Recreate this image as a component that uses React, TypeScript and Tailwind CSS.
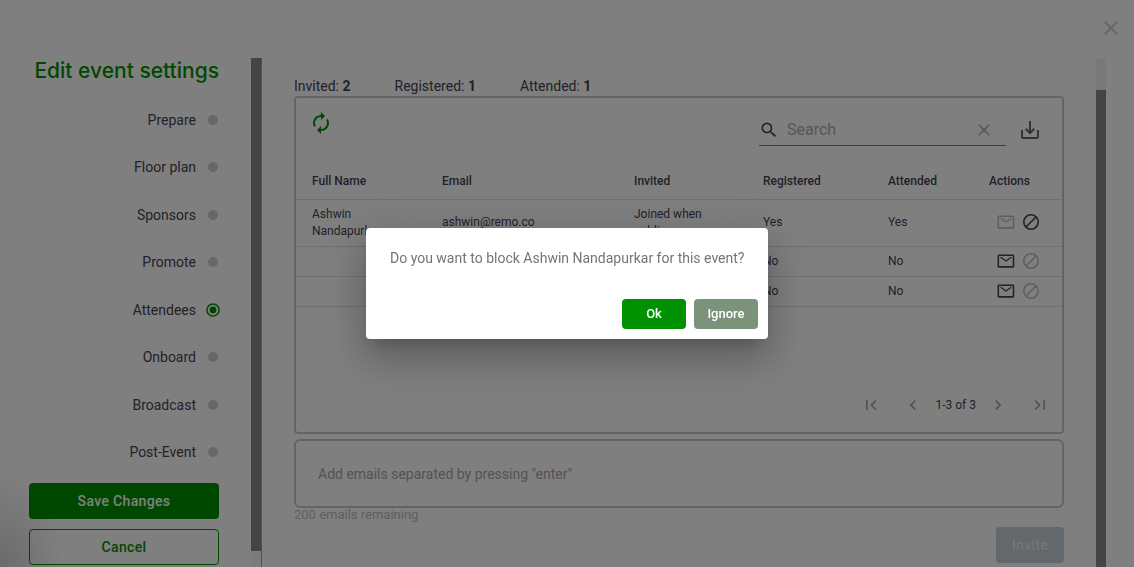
import { useState } from "react";
import {
  MdAutorenew,
  MdChevronLeft,
  MdChevronRight,
  MdClose,
  MdFirstPage,
  MdLastPage,
  MdSaveAlt,
  MdSearch,
} from "react-icons/md";

const steps = ["Prepare", "Floor plan", "Sponsors", "Promote", "Attendees", "Onboard", "Broadcast", "Post-Event"];

const columns = ["Full Name", "Email", "Invited", "Registered", "Attended", "Actions"];

const attendees = [
  { name: "Ashwin Nandapurkar", email: "ashwin@remo.co", invited: "Joined when public", registered: "Yes", attended: "Yes", joined: true },
  { name: "", email: "", invited: "", registered: "No", attended: "No", joined: false },
  { name: "", email: "", invited: "", registered: "No", attended: "No", joined: false },
];

function MailIcon() {
  return (
    <svg viewBox="0 0 20 20" className="w-5 h-5" fill="none" stroke="currentColor" strokeWidth="1.6" strokeLinejoin="round">
      <rect x="2.3" y="4.3" width="15.2" height="11.6" rx="0.6" />
      <path d="M5 6.5 L10 10 L15 6.5" strokeWidth="1.3" strokeLinecap="round" />
    </svg>
  );
}

function BlockIcon() {
  return (
    <svg viewBox="0 0 20 20" className="w-5 h-5" fill="none" stroke="currentColor" strokeWidth="1.6">
      <circle cx="10" cy="10" r="7.2" />
      <path d="M5 15 L15 5" />
    </svg>
  );
}

function ActiveDot() {
  return (
    <svg viewBox="0 0 14 14" className="w-3.5 h-3.5 -ml-0.5 -mr-px text-[#009100]">
      <circle cx="7" cy="7" r="6.1" fill="none" stroke="currentColor" strokeWidth="1.5" />
      <circle cx="7" cy="7" r="3.4" fill="currentColor" />
    </svg>
  );
}

function Sidebar() {
  return (
    <aside className="w-[251px] shrink-0 pl-[29px] pr-8">
      <h1 className="h-[26px] leading-[26px] text-right text-[21px] font-medium text-[#009100] font-['Inter',sans-serif] whitespace-nowrap">
        Edit event settings
      </h1>
      <ul className="mt-3 h-[380px] flex flex-col">
        {steps.map((step) => (
          <li key={step} className="flex-1 flex items-center">
            <a href="#" className="w-full flex items-center justify-end gap-3 text-sm">
              {step}
              {step === "Attendees" ? <ActiveDot /> : <span className="w-2.5 h-2.5 mr-px rounded-full bg-[#c5d0d8]"></span>}
            </a>
          </li>
        ))}
      </ul>
      <button className="mt-[7px] w-full h-9 rounded bg-[#009100] text-white text-sm font-medium tracking-wide">Save Changes</button>
      <button className="mt-2.5 w-full h-9 rounded border border-[#009100] text-[#009100] text-sm font-medium tracking-wide">Cancel</button>
    </aside>
  );
}

function AttendeeTable() {
  return (
    <table className="w-full table-fixed text-xs text-left">
      <colgroup>
        <col className="w-[130px]" />
        <col className="w-[192px]" />
        <col className="w-[129px]" />
        <col className="w-[125px]" />
        <col className="w-[101px]" />
        <col className="w-[89px]" />
      </colgroup>
      <thead>
        <tr className="h-[37px] border-b border-[#e0e0e0]">
          {columns.map((column) => (
            <th key={column} className="px-4 pt-0.5 font-medium">{column}</th>
          ))}
        </tr>
      </thead>
      <tbody>
        {attendees.map((row, i) => {
          const pad = row.joined ? "pb-0.5" : "";
          return (
            <tr key={i} className={`border-b border-[#e0e0e0] ${row.joined ? "h-[47px]" : "h-[30px]"}`}>
              <td className="px-4 leading-[17px]">{row.name}</td>
              <td className={`px-4 ${pad}`}>{row.email}</td>
              <td className="px-4 leading-[17px]">{row.invited}</td>
              <td className={`px-4 ${pad}`}>{row.registered}</td>
              <td className={`px-4 ${pad}`}>{row.attended}</td>
              <td className={`pl-[23px] ${pad}`}>
                <div className="flex gap-[5px]">
                  <button aria-label="Resend email" className={row.joined ? "text-[#bdbdbd]" : ""}><MailIcon /></button>
                  <button aria-label="Block attendee" className={row.joined ? "" : "text-[#bdbdbd]"}><BlockIcon /></button>
                </div>
              </td>
            </tr>
          );
        })}
      </tbody>
    </table>
  );
}

function Attendees() {
  const [search, setSearch] = useState("");

  return (
    <main className="flex-1 min-w-0 px-8 pt-[19px]">
      <div className="flex gap-11 h-[19px] text-sm leading-[19px]">
        <p>Invited: <b>2</b></p>
        <p>Registered: <b>1</b></p>
        <p>Attended: <b>1</b></p>
      </div>

      <section className="h-[338px] flex flex-col rounded border-2 border-[#c8c8c8]">
        <div className="h-16 shrink-0 flex justify-between pl-[13px] pr-5">
          <button aria-label="Refresh" className="h-6 mt-[13px] text-[#009100]"><MdAutorenew size={24} /></button>
          <div className="flex items-start">
            <label className="flex items-center w-[247px] h-8 mt-4 border-b border-[#7c7c7c]">
              <MdSearch size={20} className="shrink-0" />
              <input
                type="text"
                aria-label="Search"
                placeholder="Search"
                value={search}
                onChange={(e) => setSearch(e.target.value)}
                className="flex-1 min-w-0 ml-2 text-base outline-none placeholder:text-[#acacac]"
              />
              <button aria-label="Clear search" className="mr-3 text-[#b0b0b0]" onClick={() => setSearch("")}><MdClose size={20} /></button>
            </label>
            <button aria-label="Download" className="ml-3 mt-5 text-[#666666]"><MdSaveAlt size={24} /></button>
          </div>
        </div>
        <AttendeeTable />
        <div className="mt-auto mb-[15px] h-6 flex items-center justify-end pr-3 text-xs">
          <button aria-label="First page" className="text-[#a4a4a4]"><MdFirstPage size={20} /></button>
          <button aria-label="Previous page" className="ml-[22px] text-[#a4a4a4]"><MdChevronLeft size={20} /></button>
          <span className="mx-3">1-3 of 3</span>
          <button aria-label="Next page" className="text-[#a4a4a4]"><MdChevronRight size={20} /></button>
          <button aria-label="Last page" className="ml-[22px] text-[#a4a4a4]"><MdLastPage size={20} /></button>
        </div>
      </section>

      <input
        type="text"
        aria-label="Emails to invite"
        placeholder={'Add emails separated by pressing "enter"'}
        className="mt-[5px] w-full h-[69px] px-[22px] rounded-md border-2 border-[#c8c8c8] text-sm outline-none placeholder:text-[#a6a6a6]"
      />
      <p className="text-[13px] leading-[14px] text-[#b4c0c9]">200 emails remaining</p>
      <div className="mt-[5px] flex justify-end">
        <button disabled className="w-[68px] h-9 rounded bg-[#c5d0d8] text-white/60 text-sm font-medium tracking-wide">Invite</button>
      </div>
    </main>
  );
}

function BlockDialog() {
  return (
    <div className="fixed inset-0 z-10 flex items-center justify-center bg-black/50">
      <div
        role="dialog"
        aria-modal="true"
        className="w-[402px] pt-5 bg-white rounded shadow-[0_11px_15px_-7px_rgba(0,0,0,0.2),0_24px_38px_3px_rgba(0,0,0,0.14),0_9px_46px_8px_rgba(0,0,0,0.12)]"
      >
        <p className="px-6 text-sm text-[#757575] whitespace-nowrap">Do you want to block Ashwin Nandapurkar for this event?</p>
        <div className="mt-[31px] pr-2.5 pb-2.5 flex justify-end gap-2 text-[13px] font-medium text-white">
          <button className="w-16 h-[30px] rounded bg-[#009100]">Ok</button>
          <button className="w-16 h-[30px] rounded bg-[#7b937b]">Ignore</button>
        </div>
      </div>
    </div>
  );
}

export default function App() {
  return (
    <div className="h-screen overflow-hidden flex flex-col bg-white text-[#46434f] font-['Roboto',sans-serif]">
      <header className="h-[58px] shrink-0 flex justify-end items-center pr-[11px] pb-0.5">
        <button aria-label="Close" className="text-[#c5d0d8]"><MdClose size={24} /></button>
      </header>
      <div className="flex-1 min-h-0 flex">
        <Sidebar />
        <div className="w-[11px] shrink-0 pb-4 bg-[#f8f8f8] border-r border-[#a0a0a0]">
          <div className="h-full bg-[#888888]"></div>
        </div>
        <Attendees />
        <div className="w-2.5 mr-7 shrink-0 pt-8 bg-[#f1f1f1]">
          <div className="h-full bg-[#888888]"></div>
        </div>
      </div>
      {/* soft shade in the bottom corner */}
      <div className="fixed bottom-0 left-0 w-16 h-24 pointer-events-none bg-[radial-gradient(ellipse_at_bottom_left,rgba(0,0,0,0.16),transparent_70%)]"></div>
      <BlockDialog />
    </div>
  );
}
